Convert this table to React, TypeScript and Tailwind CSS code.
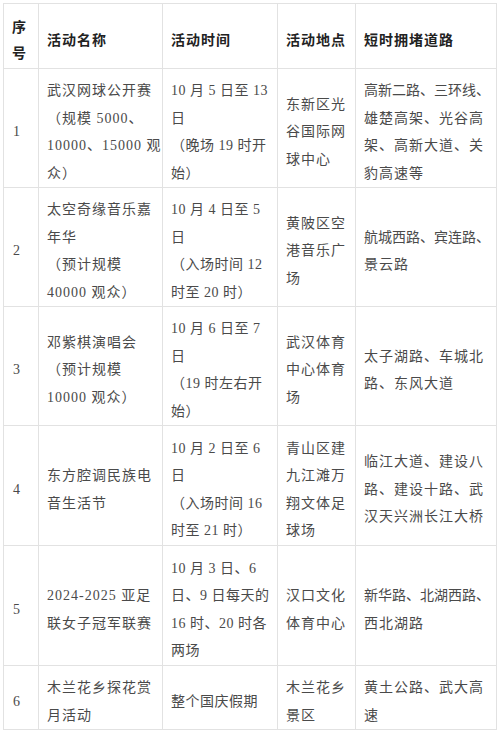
import React from "react";

type Row = { h: string; cells: string[][] };

const rows: Row[] = [
  {
    h: "h-[119px]",
    cells: [
      ["1"],
      ["武汉网球公开赛", "（规模 5000、", "10000、15000 观", "众）"],
      ["10 月 5 日至 13", "日", "（晚场 19 时开", "始）"],
      ["东新区光", "谷国际网", "球中心"],
      ["高新二路、三环线、", "雄楚高架、光谷高", "架、高新大道、关", "豹高速等"],
    ],
  },
  {
    h: "h-[119px]",
    cells: [
      ["2"],
      ["太空奇缘音乐嘉", "年华", "（预计规模", "40000 观众）"],
      ["10 月 4 日至 5", "日", "（入场时间 12", "时至 20 时）"],
      ["黄陂区空", "港音乐广", "场"],
      ["航城西路、宾连路、", "景云路"],
    ],
  },
  {
    h: "h-[119px]",
    cells: [
      ["3"],
      ["邓紫棋演唱会", "（预计规模", "10000 观众）"],
      ["10 月 6 日至 7", "日", "（19 时左右开", "始）"],
      ["武汉体育", "中心体育", "场"],
      ["太子湖路、车城北", "路、东风大道"],
    ],
  },
  {
    h: "h-[120px]",
    cells: [
      ["4"],
      ["东方腔调民族电", "音生活节"],
      ["10 月 2 日至 6", "日", "（入场时间 16", "时至 21 时）"],
      ["青山区建", "九江滩万", "翔文体足", "球场"],
      ["临江大道、建设八", "路、建设十路、武", "汉天兴洲长江大桥"],
    ],
  },
  {
    h: "h-[120px]",
    cells: [
      ["5"],
      ["2024-2025 亚足", "联女子冠军联赛"],
      ["10 月 3 日、6", "日、9 日每天的", "16 时、20 时各", "两场"],
      ["汉口文化", "体育中心"],
      ["新华路、北湖西路、", "西北湖路"],
    ],
  },
  {
    h: "h-[62px]",
    cells: [
      ["6"],
      ["木兰花乡探花赏", "月活动"],
      ["整个国庆假期"],
      ["木兰花乡", "景区"],
      ["黄土公路、武大高", "速"],
    ],
  },
];

const header: string[][] = [["序", "号"], ["活动名称"], ["活动时间"], ["活动地点"], ["短时拥堵道路"]];

function Lines({ lines, col }: { lines: string[]; col: number }) {
  return (
    <>
      {lines.map((l, i) => (
        <div
          key={i}
          className={`whitespace-nowrap ${
            col === 4 && l.length >= 9 ? "tracking-[0px]" : col === 2 ? "tracking-[0.5px]" : ""
          }`}
        >
          {l}
        </div>
      ))}
    </>
  );
}

export default function App() {
  return (
    <div className="w-[500px] h-[733px] bg-white pt-[3px] pl-[3px] font-['Liberation_Serif','Noto_Sans_CJK_SC',serif]">
      <table className="table-fixed border-collapse w-[493px] text-[14px] leading-[27.5px] tracking-[1px]">
        <colgroup>
          <col className="w-[35px]" />
          <col className="w-[124px]" />
          <col className="w-[115px]" />
          <col className="w-[78px]" />
          <col className="w-[141px]" />
        </colgroup>
        <tbody>
          <tr className="h-[65px]">
            {header.map((c, i) => (
              <td
                key={i}
                className={`border border-[#e2e2e2] align-middle pt-[9px] pb-0 font-bold text-[#222] ${
                  i === 0 ? "pl-[8px] pr-0 leading-[26px]" : "px-[8px]"
                }`}
              >
                <Lines lines={c} col={-1} />
              </td>
            ))}
          </tr>
          {rows.map((r, ri) => (
            <tr key={ri} className={r.h}>
              {r.cells.map((c, i) => (
                <td
                  key={i}
                  className={`border border-[#e2e2e2] align-middle pt-[8px] pb-0 text-[#4a4a4a] ${
                    i === 0 ? "pl-[9px] pr-0" : i === 4 ? "pl-[8px] pr-[2px]" : "px-[8px]"
                  }`}
                >
                  <Lines lines={c} col={i} />
                </td>
              ))}
            </tr>
          ))}
        </tbody>
      </table>
    </div>
  );
}
